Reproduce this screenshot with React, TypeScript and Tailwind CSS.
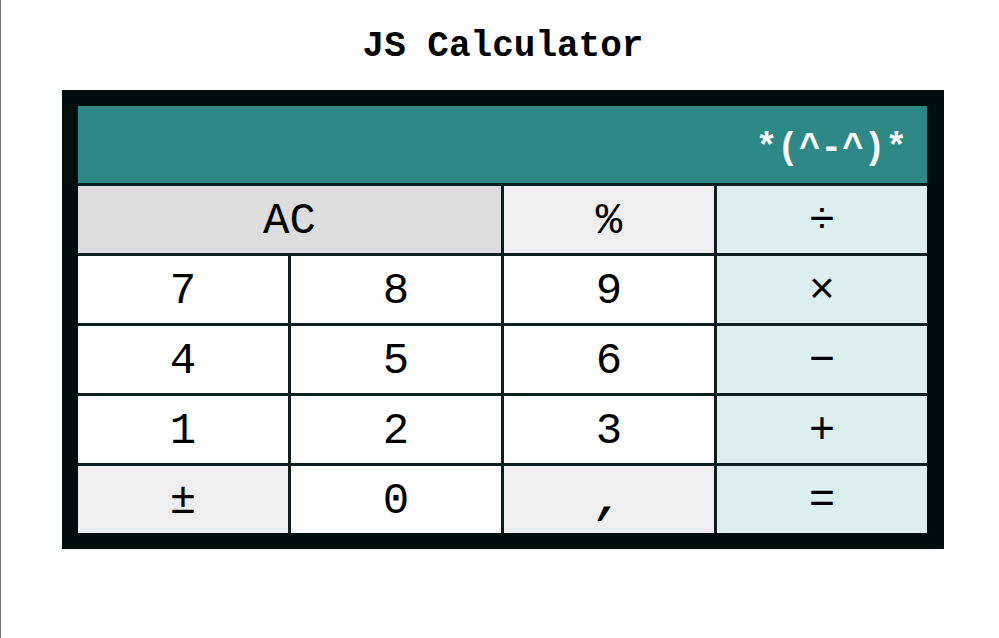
import React, { useState } from "react";

type Key = { symbol: string; name: string; tone: string };

const PLAIN = "bg-white";
const SOFT = "bg-[#eeeeee]";
const OPERATOR = "bg-[#dceeed]";

const keys: Key[] = [
  { symbol: "AC", name: "All clear", tone: "bg-[#dddddd] col-span-2" },
  { symbol: "%", name: "Percent", tone: SOFT },
  { symbol: "÷", name: "Divide", tone: OPERATOR },
  { symbol: "7", name: "7", tone: PLAIN },
  { symbol: "8", name: "8", tone: PLAIN },
  { symbol: "9", name: "9", tone: PLAIN },
  { symbol: "×", name: "Multiply", tone: OPERATOR },
  { symbol: "4", name: "4", tone: PLAIN },
  { symbol: "5", name: "5", tone: PLAIN },
  { symbol: "6", name: "6", tone: PLAIN },
  { symbol: "−", name: "Subtract", tone: OPERATOR },
  { symbol: "1", name: "1", tone: PLAIN },
  { symbol: "2", name: "2", tone: PLAIN },
  { symbol: "3", name: "3", tone: PLAIN },
  { symbol: "+", name: "Add", tone: OPERATOR },
  { symbol: "±", name: "Change sign", tone: SOFT },
  { symbol: "0", name: "0", tone: PLAIN },
  { symbol: ",", name: "Decimal comma", tone: "bg-[#eeeeee] font-bold italic" },
  { symbol: "=", name: "Equals", tone: OPERATOR },
];

const GREETING = "*(^-^)*";

export default function App() {
  const [entry, setEntry] = useState(GREETING);

  const press = (symbol: string) => {
    if (symbol === "AC") setEntry(GREETING);
    else if (/[0-9,]/.test(symbol))
      setEntry((old) => (old === GREETING ? symbol : old + symbol));
  };

  return (
    <main className="min-h-screen border-l border-[#777777] bg-white pl-[61px] pr-[55px] pt-[25px] font-['Liberation_Mono',monospace] text-black">
      <h1 className="mb-[21px] text-center text-[36px] leading-[44px] font-bold">
        JS Calculator
      </h1>
      <section
        aria-label="Calculator"
        className="grid grid-cols-4 gap-[3px] border-16 border-r-[17px] border-[#000f0e] bg-[#0c1f1e]"
      >
        <output className="col-span-4 flex h-[77px] items-center justify-end overflow-hidden bg-[#2d8886] pt-2 pr-5 text-[36px] leading-[44px] font-bold text-white">
          {entry}
        </output>
        {keys.map((key) => (
          <button
            key={key.name}
            type="button"
            aria-label={key.name}
            onClick={() => press(key.symbol)}
            className={`h-[67px] pt-[2px] text-[44px] leading-[44px] ${key.tone}`}
          >
            {key.symbol}
          </button>
        ))}
      </section>
    </main>
  );
}
